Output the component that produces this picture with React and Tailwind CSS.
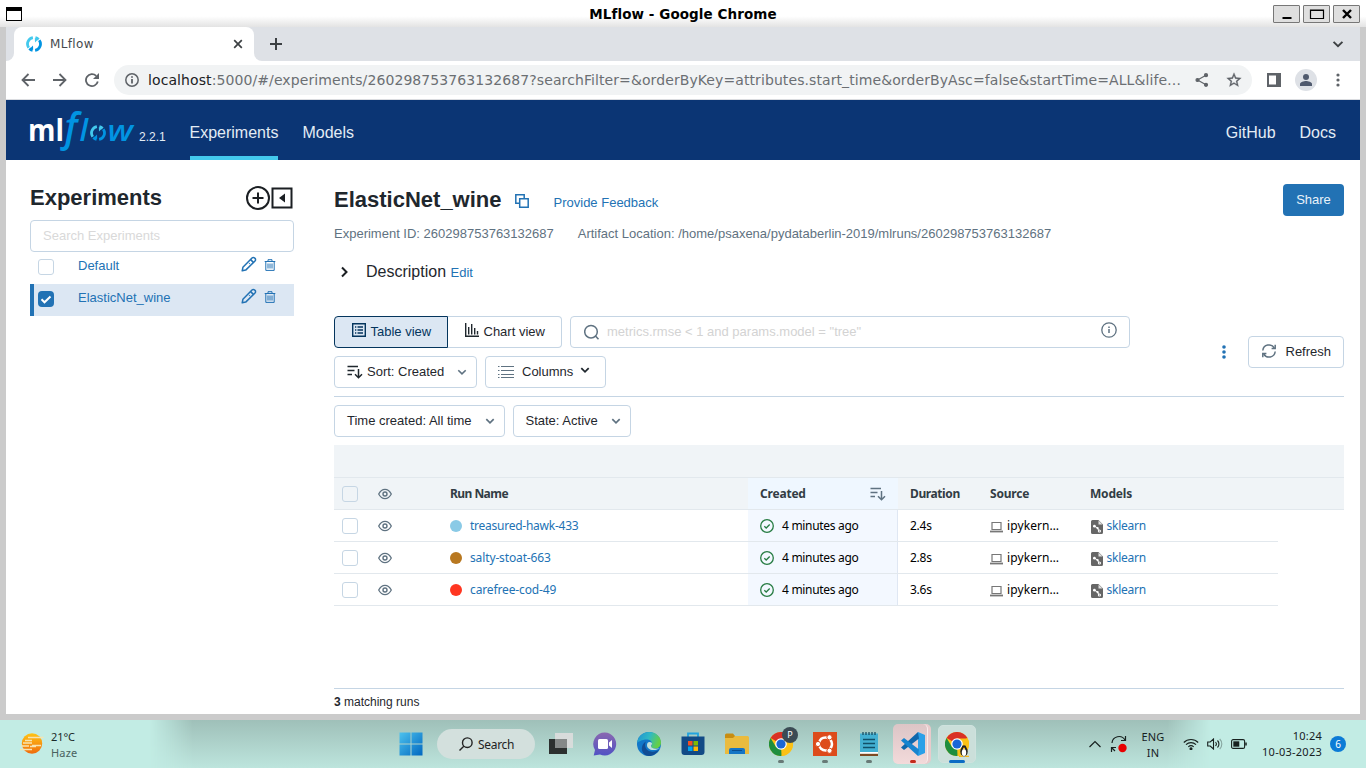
import React from "react";

const ARIAL = "font-['Liberation_Sans',Arial,sans-serif]";
const DEJAVU = "font-['DejaVu_Sans',sans-serif]";
const NOTO = "font-['Noto_Sans',sans-serif]";

function Ring({ className }) {
  return (
    <svg viewBox="0 0 16 16" className={className} fill="none" strokeWidth="2.800">
      <path d="M2.700 11.700A6.500 6.500 0 0 1 6.900 1.600" stroke="#43c9ed" />
      <path d="M9.400 1.600A6.500 6.500 0 0 1 12.600 3.400" stroke="#43c9ed" />
      <path d="M13.300 4.300A6.500 6.500 0 0 1 9.100 14.400" stroke="#0194e2" />
      <path d="M6.600 14.400A6.500 6.500 0 0 1 3.400 12.600" stroke="#0194e2" />
      <path d="M8.800 2.200l3.400 1L9 6.400z" fill="#43c9ed" stroke="none" />
      <path d="M7.200 13.800l-3.400-1L7 9.600z" fill="#0194e2" stroke="none" />
    </svg>
  );
}

function Chevron({ className, w = 2 }) {
  return (
    <svg viewBox="0 0 10 10" className={className} fill="none" stroke="currentColor" strokeWidth={w}>
      <path d="M1.300 3.200 5 6.800l3.700-3.600" />
    </svg>
  );
}

function Pencil() {
  return (
    <svg viewBox="0 0 16 16" className="h-4 w-4" fill="none" stroke="#2272b4" strokeWidth="1.500" strokeLinejoin="round">
      <path d="M1.200 14.800l.7-3.500L11 2a1.800 1.800 0 0 1 2.600 0l.4.400a1.800 1.800 0 0 1 0 2.600L4.700 14.100z" />
      <path d="M9.600 3.600l2.800 2.800M8.800 7.200l-.6.600" />
    </svg>
  );
}

function Trash() {
  return (
    <svg viewBox="0 0 12 12" className="h-3 w-3" fill="none" stroke="#2272b4" strokeWidth="1">
      <path d="M.7 2.500h10.600M4 2.300V.7h4v1.600M1.800 2.800v8.600h8.400V2.800M4 4.500v5M6 4.500v5M8 4.500v5" />
    </svg>
  );
}

function Eye() {
  return (
    <svg viewBox="0 0 14 12" className="h-3 w-3.5" fill="none" stroke="#5f7281">
      <path strokeWidth="1.300" d="M.7 6C2.400 2.800 4.500 1.300 7 1.300S11.600 2.800 13.300 6C11.600 9.200 9.500 10.700 7 10.700S2.400 9.200.7 6z" />
      <circle cx="7" cy="6" r="2" strokeWidth="1.400" />
    </svg>
  );
}

function SortIcon({ className }) {
  return (
    <svg viewBox="0 0 16 14" className={className} fill="none" stroke="currentColor" strokeWidth="1.500">
      <path d="M.5 1.500h10.500M.5 5.500h7M.5 9.500h4.500M11.500 4v8.500M8 9.300l3.500 3.500L15 9.300" />
    </svg>
  );
}

function Checkbox({ checked }) {
  return checked ? (
    <span className="flex h-4 w-4 items-center justify-center rounded-[4px] bg-[#2272b4]">
      <svg viewBox="0 0 16 16" className="h-4 w-4" fill="none" stroke="#fff" strokeWidth="2">
        <path d="M3.500 8.300l3 3 6-5.800" />
      </svg>
    </span>
  ) : (
    <span className="block h-4 w-4 rounded-[3px] border border-[#c6d6e4]" />
  );
}

function TitleBar() {
  return (
    <div className="relative flex h-[27px] shrink-0 items-start justify-between bg-linear-to-b from-white from-60% to-[#e3e3e3] pl-1.5 pr-[6px]">
      <div className="mt-[7px] h-[14px] w-4 border border-t-4 border-black bg-white" />
      <div className={`${DEJAVU} absolute inset-x-0 top-0 text-center text-[13.500px] leading-7 font-bold tracking-[0.070px] text-black`}>
        MLflow - Google Chrome
      </div>
      <div className="mt-[5px] flex gap-[3px]">
        {["min", "max", "close"].map((k) => (
          <div key={k} className="flex h-[18px] w-[27px] items-center justify-center rounded-[1px] border border-[#777] bg-[#dfdfdf]">
            <svg viewBox="0 0 16 12" className="h-3 w-4" fill="none" stroke="#000">
              {k === "min" && <path d="M3.500 10h9" strokeWidth="2" />}
              {k === "max" && <path d="M1.500 2h13v8.500h-13zM1.500 2.500h13" strokeWidth="1.200" />}
              {k === "close" && <path d="M4 2l8 8M12 2l-8 8" strokeWidth="2.400" />}
            </svg>
          </div>
        ))}
      </div>
    </div>
  );
}

function TabStrip() {
  return (
    <div className="flex h-[34px] shrink-0 bg-[#dee1e6]">
      <div className="w-2 bg-white"><div className="h-full rounded-br-lg bg-[#dee1e6]" /></div>
      <div className="flex w-60 items-center rounded-t-lg bg-white pl-3 pr-[11px]">
        <Ring className="h-4 w-4" />
        <span className={`${DEJAVU} ml-2 flex-1 text-[12px] tracking-[0.350px] text-[#45494d]`}>MLflow</span>
        <svg viewBox="0 0 10 10" className="h-2.5 w-2.5" stroke="#3c4043" strokeWidth="1.700"><path d="M1.200 1.200l7.600 7.600M8.800 1.200L1.200 8.800" /></svg>
      </div>
      <div className="w-2 bg-white"><div className="h-full rounded-bl-lg bg-[#dee1e6]" /></div>
      <div className="flex flex-1 items-center justify-between pl-2 pr-4">
        <svg viewBox="0 0 12 12" className="h-3 w-3" stroke="#3c4043" strokeWidth="2"><path d="M6 0v12M0 6h12" /></svg>
        <Chevron className="h-3 w-3 text-[#3c4043]" w={1.6} />
      </div>
    </div>
  );
}

function Toolbar() {
  return (
    <div className="flex h-[39px] shrink-0 items-center border-b border-[#dadce0] bg-white pl-[15px] text-[#5f6368]">
      <svg viewBox="0 0 14 14" className="h-3.5 w-3.5" fill="none" stroke="currentColor" strokeWidth="1.800"><path d="M14 7H1.500M7.500 1L1.500 7l6 6" /></svg>
      <svg viewBox="0 0 14 14" className="ml-[18px] h-3.5 w-3.5" fill="none" stroke="currentColor" strokeWidth="1.800"><path d="M0 7h12.500M6.500 1l6 6-6 6" /></svg>
      <svg viewBox="0 0 14 14" className="ml-[18px] h-3.5 w-3.5" fill="none" stroke="currentColor" strokeWidth="1.800">
        <path d="M12.800 8.500A6 6 0 1 1 11.200 2.800" /><path d="M14 0v6H8z" fill="currentColor" stroke="none" />
      </svg>
      <div className="ml-[15px] flex h-[30px] w-[1138px] items-center rounded-full bg-[#f1f3f4] pl-[11px]">
        <svg viewBox="0 0 14 14" className="h-3.5 w-3.5" fill="none" stroke="currentColor" strokeWidth="1.500"><circle cx="7" cy="7" r="6.200" /><path d="M7 6v4.500M7 3.300v1.500" strokeWidth="1.800" /></svg>
        <div className={`${DEJAVU} ml-[9px] w-[1035px] whitespace-nowrap text-[14px] tracking-[0.090px] text-[#6b6f73]`}>
          <span className="text-[#202124]">localhost</span>:5000/#/experiments/260298753763132687?searchFilter=&orderByKey=attributes.start_time&orderByAsc=false&startTime=ALL&life…
        </div>
        <svg viewBox="0 0 14 14" className="ml-3 h-3.5 w-3.5" fill="currentColor" stroke="currentColor" strokeWidth="1.200"><path d="M2.500 7l8.500-4.700M2.500 7l8.500 4.700" /><circle cx="2.500" cy="7" r="1.500" /><circle cx="11" cy="2.200" r="1.500" /><circle cx="11" cy="11.800" r="1.500" /></svg>
        <svg viewBox="1 1 22 22" className="ml-[17px] h-4 w-4" fill="currentColor" stroke="currentColor" strokeWidth=".4"><path d="M22 9.240l-7.190-.62L12 2 9.190 8.630 2 9.240l5.460 4.730L5.820 21 12 17.270 18.180 21l-1.630-7.030L22 9.240zM12 15.400l-3.760 2.270 1-4.280-3.320-2.880 4.380-.38L12 6.100l1.710 4.040 4.380.38-3.320 2.880 1 4.280L12 15.400z" /></svg>
      </div>
      <svg viewBox="0 0 14 14" className="ml-[15px] h-3.5 w-3.5"><path d="M0 0h14v14H0zM2 2.500v9h7v-9z" fill="currentColor" fillRule="evenodd" /></svg>
      <span className="ml-[14px] flex h-[22px] w-[22px] items-center justify-center rounded-full bg-[#dee1e6]">
        <svg viewBox="0 0 14 14" className="h-3.5 w-3.5 text-[#505a6e]" fill="currentColor"><circle cx="7" cy="4" r="3" /><path d="M1 13v-2c0-2 4-3 6-3s6 1 6 3v2z" /></svg>
      </span>
      <svg viewBox="0 0 4 14" className="ml-[19px] h-3.5 w-1" fill="currentColor"><circle cx="2" cy="2" r="1.600" /><circle cx="2" cy="7" r="1.600" /><circle cx="2" cy="12" r="1.600" /></svg>
    </div>
  );
}

function Header() {
  return (
    <div className={`${ARIAL} flex h-[60px] shrink-0 bg-[#0b3574] pl-6 pr-6 text-[16px] leading-6 text-[#e3ecf5]`}>
      <div className="relative mt-[10px] h-10 w-[104px]">
        <svg viewBox="0 0 104 40" className="h-10 w-[104px] overflow-visible">
          <text x="-2" y="31" fontFamily="Open Sans" fontWeight="700" fontSize="30" fill="#fff" textLength="36" lengthAdjust="spacingAndGlyphs">ml</text>
          <text x="34.500" y="31" fontFamily="Open Sans" fontStyle="italic" fontWeight="600" fontSize="40" fill="#0194e2" textLength="13" lengthAdjust="spacingAndGlyphs">f</text>
          <text x="49.500" y="31" fontFamily="Open Sans" fontStyle="italic" fontWeight="600" fontSize="31" fill="#0194e2">l</text>
          <text x="77.500" y="31" fontFamily="Open Sans" fontStyle="italic" fontWeight="600" fontSize="29" fill="#0194e2" textLength="25.500" lengthAdjust="spacingAndGlyphs">w</text>
        </svg>
        <div className="absolute left-[60px] top-[15px]"><Ring className="h-4 w-4" /></div>
      </div>
      <span className="ml-[5px] mt-[25px] w-[50.500px] text-[12px]">2.2.1</span>
      <div className="h-full border-b-4 border-[#43c9ed] pt-[21px]">Experiments</div>
      <div className="ml-6 pt-[21px]">Models</div>
      <div className="ml-auto pt-[21px]">GitHub</div>
      <div className="ml-6 pt-[21px]">Docs</div>
    </div>
  );
}

function SideRow({ name, selected }) {
  return (
    <div className={`flex h-8 border-l-4 ${selected ? "border-[#2272b4] bg-[#dce7f3]" : "border-transparent"}`}>
      <div className="ml-1 mt-[7px]"><Checkbox checked={selected} /></div>
      <span className="ml-6 w-[163px] text-[13px] leading-7 text-[#2272b4]">{name}</span>
      <div className="mt-1"><Pencil /></div>
      <div className="ml-[7px] mt-[7px]"><Trash /></div>
    </div>
  );
}

function Sidebar() {
  return (
    <div className="w-[264px] shrink-0">
      <div className="flex h-[60px] pt-[22px]">
        <h1 className="flex-1 text-[22px] leading-8 font-bold text-[#1f272d]">Experiments</h1>
        <svg viewBox="0 0 24 24" className="mt-1 h-6 w-6" fill="none" stroke="#1b1f23" strokeWidth="2"><circle cx="12" cy="12" r="11" /><path d="M12 6.500v11M6.500 12h11" /></svg>
        <svg viewBox="0 0 24 24" className="mt-1 h-6 w-6" fill="none" stroke="#1b1f23" strokeWidth="2"><path d="M2.500 2.500h19v19h-19z" /><path d="M15 7.500v9L9 12z" fill="#1b1f23" stroke="none" /></svg>
      </div>
      <div className="h-8 rounded-[4px] border border-[#c5d5e4] pl-3 text-[13px] leading-[30px] text-[#d9d9d9]">Search Experiments</div>
      <SideRow name="Default" />
      <SideRow name="ElasticNet_wine" selected />
    </div>
  );
}

const BTN = "flex h-8 items-center rounded-[4px] border border-[#c5d5e4]";

function Controls() {
  return (
    <div className="flex h-[81px] border-b border-[#c5d5e4] text-[13px] text-[#1f272d]">
      <div className="w-[796px]">
        <div className="flex">
          <div className="flex h-8 w-[114px] items-center rounded-l-[4px] border border-[#04355d] bg-[#dce7f3] pl-[17px] text-[#04355d]">
            <svg viewBox="0 0 14 14" className="-mt-1 h-3.5 w-3.5" fill="none" stroke="currentColor"><path d="M.7.7h12.600v12.600H.7z" strokeWidth="1.400" /><path d="M3 4h1.300M3 7h1.300M3 10h1.300M5.500 4H11M5.500 7H11M5.500 10H11" strokeWidth="1.300" /></svg>
            <span className="ml-[4.500px]">Table view</span>
          </div>
          <div className="flex h-8 w-[114px] items-center rounded-r-[4px] border border-l-0 border-[#c5d5e4] pl-[17px]">
            <svg viewBox="0 0 14 14" className="-mt-1 h-3.5 w-3.5" fill="none" stroke="currentColor" strokeWidth="1.400"><path d="M.7 0v13.300H14M3.700 4v7.500M6.700 1v10.500M9.700 5v6.500M12.500 8v3.500" /></svg>
            <span className="ml-[4.500px]">Chart view</span>
          </div>
          <div className={`${BTN} ml-2 w-[560px] pl-[13px] pr-3 text-[#d3d3d3]`}>
            <svg viewBox="0 0 16 16" className="h-4 w-4" fill="none" stroke="#5f7281" strokeWidth="1.500"><circle cx="7" cy="7.700" r="6.300" /><path d="M11.500 12l3 3.200" /></svg>
            <span className="ml-[7px] flex-1">metrics.rmse &lt; 1 and params.model = "tree"</span>
            <svg viewBox="0 0 16 16" className="-mt-1 h-4 w-4" fill="none" stroke="#5f7281" strokeWidth="1.300"><circle cx="8" cy="8" r="7.200" /><path d="M8 7v4M8 4.500V6" strokeWidth="1.500" /></svg>
          </div>
        </div>
        <div className="mt-2 flex gap-2">
          <div className={`${BTN} w-[143px] pl-3`}>
            <SortIcon className="h-3.5 w-4" />
            <span className="ml-1 w-[90px]">Sort: Created</span>
            <Chevron className="h-2.5 w-2.5 text-[#5f7281]" w={1.6} />
          </div>
          <div className={`${BTN} w-[121px] pl-3`}>
            <svg viewBox="0 0 16 14" className="h-3.5 w-4" stroke="#5f7281" strokeWidth="1.200"><path d="M0 1.500h1.500M0 5.500h1.500M0 9.500h1.500M0 12.500h1.500M3 1.500h13M3 5.500h13M3 9.500h13M3 12.500h13" /></svg>
            <span className="ml-2 w-[58px]">Columns</span>
            <Chevron className="-mt-1 h-2.5 w-2.5" w={1.8} />
          </div>
        </div>
      </div>
      <div className="mt-5 flex flex-1 items-start justify-end">
        <svg viewBox="0 0 4 14" className="mt-[9px] h-3.5 w-1" fill="#2272b4"><circle cx="2" cy="2" r="1.800" /><circle cx="2" cy="7" r="1.800" /><circle cx="2" cy="12" r="1.800" /></svg>
        <div className={`${BTN} ml-[22px] w-24 pl-[13px]`}>
          <svg viewBox="0 0 14 14" className="-mt-[3px] h-3.5 w-3.5" fill="none" stroke="#5f7281" strokeWidth="1.500"><path d="M.8 6.500A6.200 6.200 0 0 1 12.300 4M13.200 7.500A6.200 6.200 0 0 1 1.700 10" /><path d="M13.200.8V4.500H9.600M.8 13.200V9.500h3.600" /></svg>
          <span className="ml-[9.500px]">Refresh</span>
        </div>
      </div>
    </div>
  );
}

const runs = [
  { name: "treasured-hawk-433", dot: "bg-[#8acae6]", duration: "2.4s", track: "tracking-[-0.250px]" },
  { name: "salty-stoat-663", dot: "bg-[#b87820]", duration: "2.8s", track: "tracking-[-0.130px]" },
  { name: "carefree-cod-49", dot: "bg-[#ff3621]", duration: "3.6s", track: "tracking-[-0.130px]" },
];

const COLS = "grid h-8 grid-cols-[44px_72px_298px_150px_80px_100px_1fr] border-b border-[#e2e8ed]";

function RunsTable() {
  return (
    <div className={`${NOTO} mt-2 text-[12px] leading-[31px] tracking-[-0.250px] whitespace-nowrap`}>
      <div className="h-[33px] border-b border-[#e2e8ed] bg-[#f0f4f7]" />
      <div className={`${COLS} bg-[#f0f4f7] font-bold tracking-[-0.400px] text-[#323c44]`}>
        <div className="flex items-center pl-2"><Checkbox /></div>
        <div className="flex items-center"><Eye /></div>
        <div className="tracking-[-0.550px]">Run Name</div>
        <div className="flex items-center justify-between bg-[#eff7ff] pl-3 pr-3"><span className="tracking-[-0.200px]">Created</span><SortIcon className="h-3.5 w-4 text-[#5f7281]" /></div>
        <div className="pl-3">Duration</div>
        <div className="pl-3 tracking-[-0.200px]">Source</div>
        <div className="pl-3 tracking-[-0.200px]">Models</div>
      </div>
      {runs.map((r) => (
        <div key={r.name} className={`${COLS} w-[944px] text-black`}>
          <div className="flex items-center pl-2"><Checkbox /></div>
          <div className="flex items-center"><Eye /></div>
          <div className="flex items-center"><span className={`h-3 w-3 rounded-full ${r.dot}`} /><span className={`ml-2 text-[#2272b4] ${r.track}`}>{r.name}</span></div>
          <div className="flex items-center border-r border-[#dfe7f3] bg-[#f3f8ff] pl-3">
            <svg viewBox="0 0 14 14" className="h-3.5 w-3.5" fill="none" stroke="#277c43" strokeWidth="1.300"><circle cx="7" cy="7" r="6.300" /><path d="M4.300 7.200l1.900 1.800 3.500-3.500" /></svg>
            <span className="ml-2 tracking-[-0.300px]">4 minutes ago</span>
          </div>
          <div className="pl-3">{r.duration}</div>
          <div className="flex items-center pl-3">
            <svg viewBox="0 0 13 12" className="mt-[3px] h-3 w-[13px]" fill="none" stroke="#777"><path d="M2 1.500h9v7H2z" strokeWidth="1.200" /><path d="M0 10.500h13" strokeWidth="1.800" /></svg>
            <span className="ml-1 tracking-[0.100px]">ipykern…</span>
          </div>
          <div className="flex items-center pl-3">
            <svg viewBox="0 0 12 14" className="mt-[3px] ml-[0.500px] h-3.5 w-3"><path d="M1.500 0H7.500L12 4.500v8a1.500 1.500 0 0 1-1.500 1.500h-9A1.500 1.500 0 0 1 0 12.500v-11A1.500 1.500 0 0 1 1.500 0z" fill="#666" /><path d="M7.500 .500v4h4z" fill="#fff" opacity=".8" /><path d="M3.500 6.200l3 1.800 1.500 3" stroke="#fff" fill="none" strokeWidth="1" /><circle cx="3.400" cy="6.200" r="1.400" fill="#fff" /><circle cx="8.400" cy="11" r="1.600" fill="#fff" /><circle cx="6.600" cy="8.200" r="1.100" fill="#fff" /><circle cx="8.400" cy="11" r=".6" fill="#666" /></svg>
            <span className="ml-1 text-[#2272b4]">sklearn</span>
          </div>
        </div>
      ))}
    </div>
  );
}

function Main() {
  return (
    <div className="ml-10 flex w-[1010px] flex-col pt-6">
      <div className="flex h-8">
        <h1 className="text-[22px] leading-8 font-bold text-[#1f272d]">ElasticNet_wine</h1>
        <svg viewBox="0 0 14 14" className="ml-[13px] mt-[10px] mr-px h-3.5 w-3.5" fill="none" stroke="#2272b4" strokeWidth="1.500"><path d="M4.500 9.200H.8V.8h8.400v3.700M4.700 4.700h8.500v8.500H4.700z" /></svg>
        <span className="ml-6 flex-1 text-[13px] leading-[37px] text-[#2272b4]">Provide Feedback</span>
        <div className="h-8 w-[61px] rounded-[4px] bg-[#2272b4] text-center text-[13px] leading-8 text-[#e9f2fa]">Share</div>
      </div>
      <div className="mt-2 flex h-5 gap-6 text-[13px] leading-5 text-[#5f7281]">
        <span>Experiment ID: 260298753763132687</span>
        <span>Artifact Location: /home/psaxena/pydataberlin-2019/mlruns/260298753763132687</span>
      </div>
      <div className="mt-4 mb-[32px] flex h-6 items-center">
        <svg viewBox="0 0 10 12" className="ml-[6px] h-3 w-2.5" fill="none" stroke="#1b1f23" strokeWidth="2"><path d="M2 1.500L6.500 6 2 10.500" /></svg>
        <span className="ml-4 text-[16px] leading-6 text-[#1f272d]">Description</span>
        <span className="ml-[4.500px] mt-[2px] text-[13px] text-[#2272b4]">Edit</span>
      </div>
      <Controls />
      <div className="mt-2 flex gap-2 text-[13px] text-[#1f272d]">
        <div className={`${BTN} w-[171px] justify-between pl-3 pr-[9px]`}><span>Time created: All time</span><Chevron className="h-2.5 w-2.5 text-[#5f7281]" w={1.7} /></div>
        <div className={`${BTN} w-[118px] justify-between pl-[11.500px] pr-[9px]`}><span>State: Active</span><Chevron className="h-2.5 w-2.5 text-[#5f7281]" w={1.7} /></div>
      </div>
      <RunsTable />
      <div className="mt-auto h-[26px] border-t border-[#c5d5e4] text-[12px] leading-[26px] text-[#1f272d]"><b>3</b> matching runs</div>
    </div>
  );
}

function ChromeLogo() {
  return (
    <svg viewBox="0 0 24 24" className="h-6 w-6">
      <circle cx="12" cy="12" r="12" fill="#fbc116" />
      <path d="M12 12L1.600 6A12 12 0 0 1 22.400 6z" fill="#d93025" />
      <path d="M12 12l.5 12A12 12 0 0 1 1.600 6L7 15z" fill="#1e8e3e" />
      <path d="M12 6.500h10.700A12 12 0 0 1 12.500 24L17 14z" fill="#fbc116" />
      <circle cx="12" cy="12" r="5.800" fill="#fff" />
      <circle cx="12" cy="12" r="4.600" fill="#1a66d6" />
    </svg>
  );
}

function TaskItem({ children, mark }) {
  return (
    <div className="relative flex h-12 w-11 shrink-0 items-center justify-center">
      {children}
      {mark && <span className={`absolute bottom-[5px] h-[3px] rounded-full ${mark}`} />}
    </div>
  );
}

function Taskbar() {
  return (
    <div className={`${NOTO} relative flex h-12 shrink-0 items-center bg-[#c2ece4] text-[11px] leading-4 text-[#1a2b29]`}>
      <div className="absolute inset-y-0 left-[150px] w-[1060px] bg-linear-to-b from-[#9fc0b9] to-[#bde5dd] mask-r-from-96% mask-l-from-96%" />
      <div className="relative flex w-[389px] items-center pl-5">
        <svg viewBox="0 0 24 22" className="h-[22px] w-6">
          <defs><linearGradient id="sun" x2="0" y2="1"><stop stopColor="#ffc414" /><stop offset="1" stopColor="#ef6c0d" /></linearGradient></defs>
          <circle cx="12" cy="10.500" r="10.200" fill="url(#sun)" />
          <path d="M8 4.500h15.500M5 7.500h7M3 10h9M12 12.500h9M1 13h8M10 13.500h6M0 16.500h12" stroke="#f7e3b0" strokeWidth="1.400" />
        </svg>
        <div className="ml-[7px] mt-px"><div className="tracking-[-0.100px]">21°C</div><div className="tracking-[0.200px] text-[#49625f]">Haze</div></div>
      </div>
      <TaskItem><svg viewBox="0 0 24 24" className="mr-px h-6 w-6"><defs><linearGradient id="win" x2="1" y2="1"><stop stopColor="#4cc2ee" /><stop offset="1" stopColor="#0067c0" /></linearGradient></defs><path d="M.5.5h11v11H.5zM12.500.5h11v11h-11zM.5 12.500h11v11H.5zM12.500 12.500h11v11h-11z" fill="url(#win)" /></svg></TaskItem>
      <div className="relative ml-1 mr-[4px] flex h-[30px] w-[98px] items-center rounded-full bg-[#d3e0dd] pl-[22px] text-[12px] text-[#222]">
        <svg viewBox="0 0 14 14" className="h-3.5 w-3.5" fill="none" stroke="#222" strokeWidth="1.400"><circle cx="8.300" cy="5.700" r="4.800" /><path d="M4.800 9.200L.5 13.500" /></svg>
        <span className="mt-px ml-[5px] tracking-[-0.300px]">Search</span>
      </div>
      <TaskItem><svg viewBox="0 0 24 24" className="h-6 w-6"><path d="M0 7h18v15H0z" fill="#2c302f" /><path d="M6 1h18v15H6z" fill="#d8dcdb" /><path d="M6 7h12v9H6z" fill="#858988" /></svg></TaskItem>
      <TaskItem><svg viewBox="0 0 24 24" className="h-6 w-6"><defs><linearGradient id="chat" x2="0" y2="1"><stop stopColor="#8a68b0" /><stop offset="1" stopColor="#5152c4" /></linearGradient></defs><path d="M12 .500A11.500 11.500 0 1 1 7 22.500L.7 23.500 2 18A11.500 11.500 0 0 1 12 .500z" fill="url(#chat)" /><rect x="5" y="7" width="10" height="10" rx="1.500" fill="#fff" /><path d="M16 10.500l3-2.500v8l-3-2.500z" fill="#fff" /></svg></TaskItem>
      <TaskItem><svg viewBox="0 0 24 24" className="h-6 w-6"><defs><linearGradient id="edge" x2="1" y2=".3"><stop stopColor="#1e90d4" /><stop offset=".55" stopColor="#30b9c4" /><stop offset="1" stopColor="#65cf46" /></linearGradient></defs><circle cx="12" cy="12" r="12" fill="#1277c9" /><path d="M0 11C1 4 6 0 12 0c7 0 12 5 12 10.500 0 4-3 6-6 6-2.500 0-4-1-4-2 0-.8 1-1 1-3C15 9 12.500 7.500 9.500 7.500 5 7.500 1 10 0 11z" fill="url(#edge)" /><path d="M9 9.500c-2 3-1 9 5 10 3 .6 6-.3 8-2-2 4-6 6.500-10 6.500-5 0-8-5-7-9 .5-2.500 2-4.500 4-5.500z" fill="#124d94" /><path d="M10.500 11c-1.500 3 .500 6.500 4.500 7 3 .4 6-.5 8-2-4 1.500-9 .500-9-2 0-.8 1-1 1-3-1.500-1.500-3.500-1.500-4.500 0z" fill="#c0dfdb" /></svg></TaskItem>
      <TaskItem><svg viewBox="0 0 24 24" className="h-6 w-6"><path d="M7 6V1.500h10V6" stroke="#22a4df" strokeWidth="1.800" fill="none" /><path d="M.5 4.500h23V20a3 3 0 0 1-3 3h-17a3 3 0 0 1-3-3z" fill="#124a86" /><path d="M7 9h4.500v4.500H7z" fill="#f25022" /><path d="M12.500 9H17v4.500h-4.500z" fill="#7fba00" /><path d="M7 14.500h4.500V19H7z" fill="#00a4ef" /><path d="M12.500 14.500H17V19h-4.500z" fill="#ffb900" /></svg></TaskItem>
      <TaskItem><svg viewBox="0 0 24 24" className="h-6 w-6"><path d="M0 3a1.500 1.500 0 0 1 1.500-1.500H8L10 4v4H0z" fill="#c78d12" /><path d="M0 6h8l2-2h12.500A1.500 1.500 0 0 1 24 5.500V22H0z" fill="#eabb3e" /><path d="M4 22v-4a2 2 0 0 1 2-2h12a2 2 0 0 1 2 2v4z" fill="#1575c5" /><path d="M7 18.500h10" stroke="#0a4d90" /></svg></TaskItem>
      <TaskItem mark="w-1.5 bg-[#687a77]"><ChromeLogo /><span className="absolute left-[23px] top-[7px] h-4 w-4 rounded-full bg-[#3b4b54] text-center text-[9px] leading-4 text-white">P</span></TaskItem>
      <TaskItem mark="w-1.5 bg-[#687a77]"><svg viewBox="0 0 24 24" className="h-6 w-6"><path d="M0 0h24v24H0z" fill="#dd4b1b" /><circle cx="12.500" cy="12" r="6.500" fill="none" stroke="#fff" strokeWidth="2.500" strokeDasharray="11.600 2" strokeDashoffset="5.800" /><circle cx="5" cy="12" r="2.600" fill="#fff" stroke="#dd4b1b" /><circle cx="16.500" cy="5.300" r="2.600" fill="#fff" stroke="#dd4b1b" /><circle cx="16.500" cy="18.700" r="2.600" fill="#fff" stroke="#dd4b1b" /></svg></TaskItem>
      <TaskItem mark="w-1.5 bg-[#687a77]"><svg viewBox="0 0 24 24" className="h-6 w-6"><path d="M3 1.500h18V20H3z" fill="#43b0d2" /><path d="M3 21h18v3H3z" fill="#7d4a23" /><path d="M3 20h18v1.800H3z" fill="#fff" /><path d="M6 0v3M9 0v3M12 0v3M15 0v3M18 0v3" stroke="#164e63" strokeWidth="1.300" /><path d="M6 7.500h12M6 11.500h12M6 15.500h12" stroke="#115069" strokeWidth="1.400" /></svg></TaskItem>
      <TaskItem mark="w-1.5 bg-[#c42b1c]">
        <span className="absolute left-[8px] top-1 h-10 w-8 rounded-[5px] bg-[#e8cbcc]" />
        <span className="absolute left-0.5 top-1 h-10 w-[35px] rounded-[5px] border-r border-[#f7ecec] bg-linear-to-b from-[#dcc5c6] to-[#f3dada]" />
        <svg viewBox="0 0 24 24" className="relative h-6 w-6"><path d="M17 0l7 3v18l-7 3z" fill="#2ba0e8" /><path d="M17 0l1 6.500L3 18l-3-2.500L17 0z" fill="#0f67ac" /><path d="M17 24l1-6.500L3 6 0 8.500 17 24z" fill="#1684cf" /></svg>
      </TaskItem>
      <TaskItem mark="w-4 bg-[#0b6cc4]">
        <span className="absolute left-[3px] top-[5px] h-[38px] w-[38px] rounded-[5px] border border-[#cfe2de] bg-[#cbdfda]" />
        <span className="relative"><ChromeLogo /></span>
        <svg viewBox="0 0 10 12" className="absolute bottom-[11px] left-[24px] h-3 w-2.5"><ellipse cx="5" cy="6.500" rx="3.700" ry="5" fill="#222" /><circle cx="5" cy="2.500" r="2.300" fill="#222" /><ellipse cx="5" cy="7.500" rx="2.200" ry="3.500" fill="#fff" /><path d="M0 11.500h4M6 11.500h4M4 3.500h2" stroke="#f7b719" strokeWidth="1.500" /></svg>
      </TaskItem>
      <div className="relative flex flex-1 items-center justify-end pr-5 text-[#17211f]">
        <svg viewBox="0 0 12 8" className="h-2 w-3" fill="none" stroke="currentColor" strokeWidth="1.200"><path d="M.5 7L6 1.500 11.500 7" /></svg>
        <svg viewBox="0 0 18 18" className="ml-[9px] mr-px h-[18px] w-[18px]" fill="none" stroke="currentColor" strokeWidth="1.200"><path d="M2 8a7 7 0 0 1 13-3M15.500 1v4.500H11M6 12.500H1.500V17M2 13l3 3" /><circle cx="12.500" cy="13" r="4.200" fill="#e80000" stroke="none" /></svg>
        <div className="ml-[11px] mt-[2px] w-[26px] text-center tracking-[0.200px]">ENG<br />IN</div>
        <svg viewBox="0 0 16 12" className="ml-[17px] h-3 w-4" fill="none" stroke="currentColor" strokeWidth="1.100"><path d="M.8 4.500a10 10 0 0 1 14.400 0M3 6.700a7 7 0 0 1 10 0M5.300 8.800a4 4 0 0 1 5.400 0" /><circle cx="8" cy="10.700" r="1" fill="currentColor" /></svg>
        <svg viewBox="0 0 16 12" className="ml-2 h-3 w-4" fill="none" stroke="currentColor" strokeWidth="1.100"><path d="M.7 4h2.500l3.300-3v10l-3.300-3H.7zM8.500 4a3 3 0 0 1 0 4M10.500 2.500a5 5 0 0 1 0 7" /><path d="M12.700 1a7 7 0 0 1 0 10" opacity=".35" /></svg>
        <svg viewBox="0 0 16 10" className="ml-2 h-2.5 w-4" fill="none" stroke="currentColor" strokeWidth="1.100"><rect x=".6" y=".6" width="13" height="8.800" rx="1.500" /><path d="M2.300 2.300h6v5.400h-6z" fill="currentColor" stroke="none" /><path d="M15 3.500v3" strokeWidth="1.500" /></svg>
        <div className="ml-3 w-[63px] text-right tracking-[0.250px] whitespace-nowrap">10:24<br />10-03-2023</div>
        <span className="ml-2 h-4 w-4 rounded-full bg-[#0b7bd6] text-center text-[10px] leading-4 text-white">6</span>
      </div>
    </div>
  );
}

export default function App() {
  return (
    <div className="flex h-[768px] w-[1366px] flex-col overflow-hidden">
      <TitleBar />
      <div className="flex h-[693px] shrink-0 flex-col border-x-6 border-b-6 border-[#cbcbcb] bg-white">
        <TabStrip />
        <Toolbar />
        <Header />
        <div className={`${ARIAL} flex min-h-0 flex-1 pl-6`}>
          <Sidebar />
          <Main />
        </div>
      </div>
      <Taskbar />
    </div>
  );
}
